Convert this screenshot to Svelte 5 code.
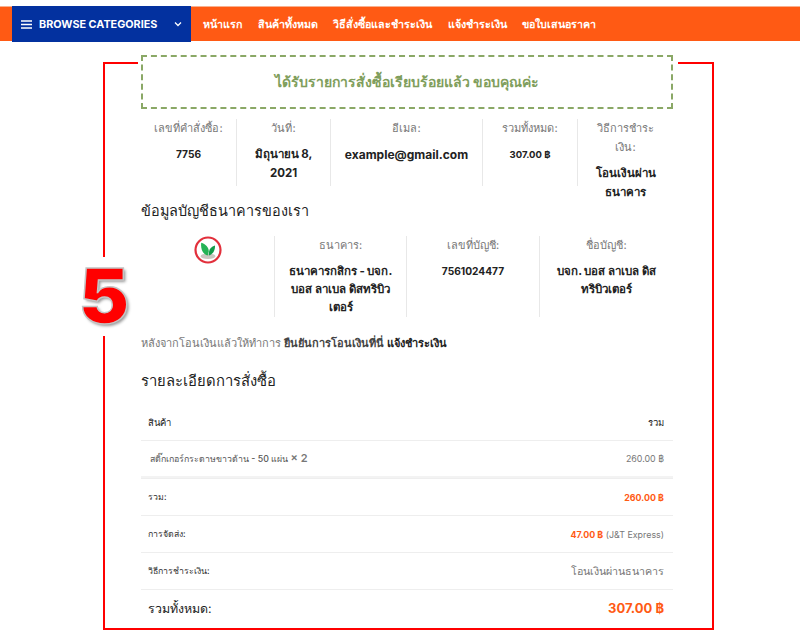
<script>
	const links = ['หน้าแรก', 'สินค้าทั้งหมด', 'วิธีสั่งซื้อและชำระเงิน', 'แจ้งชำระเงิน', 'ขอใบเสนอราคา'];

	const overview = [
		{ label: 'เลขที่คำสั่งซื้อ:', value: '7756', width: 96, kind: 'num' },
		{ label: 'วันที่:', value: 'มิถุนายน 8, 2021', width: 94 },
		{ label: 'อีเมล:', value: 'example@gmail.com', width: 152, kind: 'email' },
		{ label: 'รวมทั้งหมด:', value: '307.00 ฿', width: 95, kind: 'small' },
		{ label: 'วิธีการชำระเงิน:', value: 'โอนเงินผ่านธนาคาร', width: 95 },
	];

	const bank = [
		{ label: 'ธนาคาร:', value: 'ธนาคารกสิกร - บจก. บอส ลาเบล ดิสทริบิวเตอร์', width: 132 },
		{ label: 'เลขที่บัญชี:', value: '7561024477', width: 133, kind: 'num' },
		{ label: 'ชื่อบัญชี:', value: 'บจก. บอส ลาเบล ดิสทริบิวเตอร์', width: 133 },
	];
</script>

<div class="page">
	<nav class="topbar">
		<div class="browse">
			<svg class="burger" width="11" height="9" viewBox="0 0 11 9">
				<path d="M0 1h11M0 4.500h11M0 8h11" stroke="#fff" stroke-width="1.300" />
			</svg>
			<span>BROWSE CATEGORIES</span>
			<svg class="chev" width="8" height="6" viewBox="0 0 8 6">
				<path d="M1 1.500l3 3 3-3" fill="none" stroke="#fff" stroke-width="1.300" />
			</svg>
		</div>
		<div class="links">
			{#each links as link}
				<span>{link}</span>
			{/each}
		</div>
	</nav>

	<main class="order">
		<div class="frame"></div>
		<div class="step">5</div>

		<div class="notice">ได้รับรายการสั่งซื้อเรียบร้อยแล้ว ขอบคุณค่ะ</div>

		<div class="overview">
			{#each overview as item}
				<div class="cell" style="width: {item.width}px">
					<div class="label">{item.label}</div>
					<div class="value {item.kind}">{item.value}</div>
				</div>
			{/each}
		</div>

		<h2 class="bank-title">ข้อมูลบัญชีธนาคารของเรา</h2>

		<div class="bank">
			<div class="cell logo" style="width: 134px">
				<svg width="28" height="28" viewBox="0 0 28 28">
					<circle cx="14" cy="14" r="12.500" fill="#fff" stroke="#e2303c" stroke-width="2.200" />
					<ellipse cx="14" cy="20.300" rx="7.500" ry="2.800" fill="#cbc6c0" />
					<path d="M13.800 19.500C9 18.500 6.500 13.500 7.200 6.800 11.500 8 14.800 11.500 14.800 15.500z" fill="#25b255" />
					<path d="M14.800 19.500C18.500 18.500 21.200 15 21 9.500 17.500 10.500 15.200 13 15 16z" fill="#139a49" />
				</svg>
			</div>
			{#each bank as item}
				<div class="cell" style="width: {item.width}px">
					<div class="label">{item.label}</div>
					<div class="value {item.kind}">{item.value}</div>
				</div>
			{/each}
		</div>

		<p class="hint">หลังจากโอนเงินแล้วให้ทำการ <b>ยืนยันการโอนเงินที่นี่</b> <strong>แจ้งชำระเงิน</strong></p>

		<h2 class="detail-title">รายละเอียดการสั่งซื้อ</h2>

		<div class="table">
			<div class="row head">
				<span>สินค้า</span>
				<span>รวม</span>
			</div>
			<div class="row thick">
				<span class="product">สติ๊กเกอร์กระดาษขาวด้าน - 50 แผ่น <em>× 2</em></span>
				<span class="muted">260.00 ฿</span>
			</div>
			<div class="row">
				<span class="key">รวม:</span>
				<span class="price">260.00 ฿</span>
			</div>
			<div class="row">
				<span class="key">การจัดส่ง:</span>
				<span class="muted"><span class="price">47.00 ฿</span> (J&amp;T Express)</span>
			</div>
			<div class="row">
				<span class="key">วิธีการชำระเงิน:</span>
				<span class="method">โอนเงินผ่านธนาคาร</span>
			</div>
			<div class="row total">
				<span>รวมทั้งหมด:</span>
				<span class="grand">307.00 ฿</span>
			</div>
		</div>
	</main>
</div>

<style>
	:global(body) {
		margin: 0;
		background: #fff;
	}

	.page {
		width: 800px;
		height: 640px;
		overflow: hidden;
		font-family: Inter, "Noto Sans", sans-serif;
		color: #777;
	}

	.topbar {
		margin-top: 6px;
		height: 35px;
		background: #ff5a14;
		box-shadow: inset 0 1px #f9b08e;
		display: flex;
		padding-left: 12px;
		color: #fff;
		font-size: 10.700px;
		font-weight: 600;
	}

	.browse {
		width: 179px;
		height: 36px;
		background: #03319f;
		display: flex;
		align-items: center;
		padding-left: 9px;
		box-sizing: border-box;
		font-size: 10.800px;
		font-weight: 700;
	}

	.burger {
		margin-right: 7px;
	}

	.chev {
		margin-left: 17px;
	}

	.links {
		display: flex;
		gap: 15.500px;
		align-items: center;
		padding: 1px 0 0 12px;
	}

	.order {
		position: relative;
		width: 532px;
		margin: 14px 0 0 141px;
	}

	.frame {
		position: absolute;
		left: -38px;
		top: 7px;
		width: 607px;
		height: 564px;
		border: 2px solid #f00;
	}

	.step {
		position: absolute;
		left: -72px;
		top: 202px;
		width: 70px;
		height: 79px;
		background: #fff;
		font-weight: 900;
		font-size: 76px;
		line-height: 76px;
		text-align: center;
		color: #f00;
		-webkit-text-stroke: 1.500px #c4c4c4;
		text-shadow: 2px 2px 3px #999;
	}

	.notice {
		position: relative;
		height: 54px;
		box-sizing: border-box;
		border: 2px dashed #8aa866;
		box-shadow: -3px 0 #fff, 5px 0 #fff;
		background: #fff;
		display: flex;
		align-items: center;
		justify-content: center;
		font-size: 14px;
		font-weight: 600;
		color: #7f9e5c;
	}

	.overview,
	.bank {
		position: relative;
		display: flex;
		text-align: center;
		font-size: 11.500px;
		line-height: 19px;
	}

	.overview {
		margin-top: 10px;
		height: 67px;
	}

	.bank {
		margin-top: 14px;
		height: 81px;
		line-height: 18px;
	}

	.cell {
		box-sizing: border-box;
		padding: 0 10px;
		border-right: 1px solid #e8e8e8;
		flex: none;
	}

	.bank .logo {
		padding: 0;
	}

	.cell:last-child {
		border-right: 0;
	}

	.bank .cell:last-child {
		padding: 0 14px;
	}

	.label {
		margin-bottom: 7px;
		font-size: 11px;
		color: #777;
	}

	.bank .label {
		margin-bottom: 8px;
	}

	.value {
		font-weight: 700;
		color: #222;
	}

	.value.num {
		font-size: 10.200px;
	}

	.value.small {
		font-size: 9.500px;
	}

	.value.email {
		font-size: 12px;
	}

	h2 {
		position: relative;
		margin: 0;
		font-weight: 400;
		color: #222;
	}

	.bank-title {
		margin-top: 14px;
		font-size: 14.400px;
		line-height: 22px;
	}

	.hint {
		position: relative;
		margin: 17px 0 0;
		font-size: 11px;
		line-height: 18px;
	}

	.hint b {
		color: #444;
	}

	.hint strong {
		color: #222;
	}

	.detail-title {
		margin-top: 17px;
		font-size: 14.800px;
		line-height: 24px;
	}

	.table {
		position: relative;
		margin-top: 11px;
	}

	.row {
		height: 37px;
		padding: 0 9px 0 7px;
		box-sizing: border-box;
		display: flex;
		justify-content: space-between;
		align-items: center;
		border-top: 1px solid #eee;
		font-size: 8.900px;
	}

	.head {
		height: 36px;
		border-top: 0;
		color: #222;
		font-size: 9.500px;
	}

	.thick {
		border-bottom: 2px solid #f3f3f3;
		height: 38px;
	}

	.product {
		margin-left: 2px;
		font-size: 8.800px;
		font-weight: 500;
		color: #555;
	}

	.product em {
		font-style: normal;
		font-weight: 600;
		font-size: 11px;
		color: #777;
	}

	.key {
		font-size: 8.800px;
		color: #333;
	}

	.muted {
		color: #777;
	}

	.price {
		color: #ff5a14;
		font-weight: 700;
	}

	.method {
		font-size: 10.700px;
	}

	.total {
		font-size: 12.400px;
		color: #222;
	}

	.grand {
		color: #ff5a14;
		font-weight: 700;
		font-size: 13px;
	}
</style>
